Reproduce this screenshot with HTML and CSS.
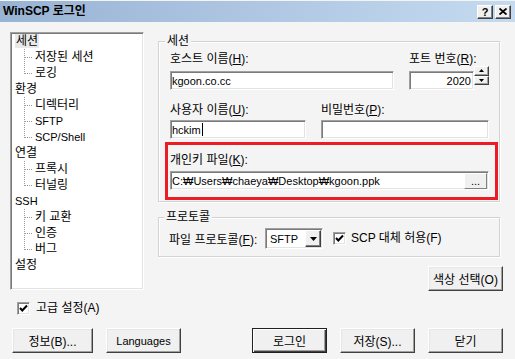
FILE: index.html
```html
<!DOCTYPE html>
<html>
  <head>
    <meta charset="utf-8">
    <title>WinSCP 로그인</title>
    <link rel="stylesheet" href="styles.css">
  </head>
  <body>
    <div class="titlebar">
      <span class="caption">WinSCP 로그인</span>
      <span class="capbtns">
        <button class="capbtn">?</button>
        <button class="capbtn">
          <svg width="8" height="7" viewBox="0 0 8 7"><path d="M0.5 0.5 L7.5 6.5 M7.5 0.5 L0.5 6.5" stroke="#000" stroke-width="1.8" fill="none"/></svg>
        </button>
      </span>
    </div>

    <div class="main">
      <div class="side">
        <ul class="tree">
          <li class="node"><span class="sel">세션</span></li>
          <li class="leaf">저장된 세션</li>
          <li class="leaf last">로깅</li>
          <li class="node">환경</li>
          <li class="leaf">디렉터리</li>
          <li class="leaf lat">SFTP</li>
          <li class="leaf last lat">SCP/Shell</li>
          <li class="node">연결</li>
          <li class="leaf">프록시</li>
          <li class="leaf last">터널링</li>
          <li class="node lat">SSH</li>
          <li class="leaf">키 교환</li>
          <li class="leaf">인증</li>
          <li class="leaf last">버그</li>
          <li class="node">설정</li>
        </ul>

        <div class="check adv">
          <span class="box"><svg width="11" height="11" viewBox="0 0 11 11"><path d="M2 5 L4.3 7.5 L9 2.5" stroke="#000" stroke-width="2" fill="none"/></svg></span>
          <span>고급 설정(A)</span>
        </div>
      </div>

      <div class="panel">
        <div class="group session">
          <div class="legend">세션</div>

          <div class="row first">
            <div class="field host">
              <div class="label">호스트 이름(<u>H</u>):</div>
              <div class="edit"><span class="lat">kgoon.co.cc</span></div>
            </div>
            <div class="field port">
              <div class="label">포트 번호(<u>R</u>):</div>
              <div class="spin">
                <div class="edit num"><span class="lat">2020</span></div>
                <div class="spinbtns">
                  <span class="spinbtn"><svg width="5" height="3" viewBox="0 0 5 3"><path d="M2.5 0 L5 3 L0 3 Z" fill="#000"/></svg></span>
                  <span class="spinbtn"><svg width="5" height="3" viewBox="0 0 5 3"><path d="M0 0 L5 0 L2.5 3 Z" fill="#000"/></svg></span>
                </div>
              </div>
            </div>
          </div>

          <div class="row second">
            <div class="field user">
              <div class="label">사용자 이름(<u>U</u>):</div>
              <div class="edit"><span class="lat">hckim</span><span class="caret"></span></div>
            </div>
            <div class="field pass">
              <div class="label">비밀번호(<u>P</u>):</div>
              <div class="edit"></div>
            </div>
          </div>

          <div class="keybox">
            <div class="label">개인키 파일(<u>K</u>):</div>
            <div class="edit">
              <span class="lat path">C:₩Users₩chaeya₩Desktop₩kgoon.ppk</span>
              <span class="browse">...</span>
            </div>
          </div>
        </div>

        <div class="group protocol">
          <div class="legend">프로토콜</div>
          <div class="protorow">
            <span class="protolabel">파일 프로토콜(<u>F</u>):</span>
            <div class="combo">
              <span class="lat">SFTP</span>
              <span class="dropbtn"><svg width="7" height="4" viewBox="0 0 7 4"><path d="M0 0 L7 0 L3.5 4 Z" fill="#000"/></svg></span>
            </div>
            <div class="check scp">
              <span class="box"><svg width="11" height="11" viewBox="0 0 11 11"><path d="M2 5 L4.3 7.5 L9 2.5" stroke="#000" stroke-width="2" fill="none"/></svg></span>
              <span>SCP 대체 허용(F)</span>
            </div>
          </div>
        </div>

        <button class="btn color">색상 선택(O)</button>
      </div>
    </div>

    <div class="buttons">
      <button class="btn wide">정보(B)...</button>
      <button class="btn"><span class="lat">Languages</span></button>
      <button class="btn default">로그인</button>
      <button class="btn">저장(S)...</button>
      <button class="btn">닫기</button>
    </div>
  </body>
</html>
```

FILE: styles.css
```css
* {
  box-sizing: border-box;
}
body {
  margin: 0;
  width: 515px;
  height: 359px;
  overflow: hidden;
  background: #f4f4f4;
  font-family: "Liberation Sans", "Noto Sans CJK KR", sans-serif;
  font-size: 12px;
  color: #000;
}
.lat {
  font-size: 11px;
}
u {
  text-decoration-thickness: 1px;
  text-underline-offset: 1px;
}

/* title bar */
.titlebar {
  display: flex;
  align-items: center;
  justify-content: space-between;
  height: 21px;
  margin-top: 1px;
  padding: 0 4px 0 3px;
  background: linear-gradient(to right, #99b3d4, #c4daf0);
}
.caption {
  font-weight: bold;
  line-height: 21px;
}
.capbtns {
  display: flex;
  gap: 2px;
}
.capbtn {
  display: flex;
  align-items: center;
  justify-content: center;
  width: 16px;
  height: 14px;
  padding: 0;
  background: #f0f0f0;
  border: 1px solid;
  border-color: #fff #404040 #404040 #fff;
  box-shadow: inset -1px -1px #808080;
  font: bold 11px "Liberation Sans", sans-serif;
  line-height: 12px;
}

/* layout */
.main {
  display: flex;
  padding: 10px 0 0 10px;
}
.side {
  width: 134px;
}
.panel {
  display: flex;
  flex-direction: column;
  width: 345px;
  margin-left: 14px;
}

/* tree */
.tree {
  width: 134px;
  height: 258px;
  margin: 0;
  padding: 0;
  list-style: none;
  background: #fff;
  border: 1px solid;
  border-color: #a0a0a0 #fff #fff #a0a0a0;
  box-shadow: inset 1px 1px #7a7a7a, inset -1px -1px #e3e3e3;
}
.tree li {
  height: 16px;
  line-height: 16px;
  white-space: nowrap;
}
.tree .node {
  padding-left: 4px;
}
.tree .sel {
  padding: 0 1px;
  background: #e9e9e9;
}
.tree .leaf {
  padding-left: 24px;
  background:
    repeating-linear-gradient(to bottom, #9a9a9a 0 1px, transparent 1px 2px) 13px 0 / 1px 100% no-repeat,
    repeating-linear-gradient(to right, #9a9a9a 0 1px, transparent 1px 2px) 14px 8px / 8px 1px no-repeat;
}
.tree .leaf.last {
  background-size: 1px 9px, 8px 1px;
}

/* checkbox */
.check {
  display: flex;
  align-items: center;
  gap: 6px;
  height: 13px;
  line-height: 13px;
  white-space: nowrap;
}
.box {
  display: flex;
  align-items: center;
  justify-content: center;
  width: 13px;
  height: 13px;
  background: #fff;
  border: 1px solid;
  border-color: #a0a0a0 #fff #fff #a0a0a0;
  box-shadow: inset 1px 1px #7a7a7a, inset -1px -1px #e3e3e3;
}
.adv {
  margin: 12px 0 0 7px;
}
.scp {
  gap: 5px;
}

/* group boxes */
.group {
  width: 342px;
  border: 1px solid #d3d3d3;
  box-shadow: inset 1px 1px #fff, 1px 1px #fff;
}
.legend {
  display: table;
  height: 14px;
  line-height: 14px;
  margin: -8px 0 0 -5px;
  padding: 0 2px;
  background: #f4f4f4;
}
.session {
  margin-top: 9px;
  padding: 0 10px 1px 11px;
}
.protocol {
  margin-top: 15px;
  padding: 0 10px 7px 10px;
}

/* fields */
.row {
  display: flex;
  gap: 15px;
}
.label {
  height: 14px;
  line-height: 14px;
  white-space: nowrap;
}
.edit {
  display: flex;
  align-items: center;
  height: 19px;
  padding: 0 1px;
  background: #fff;
  border: 1px solid;
  border-color: #a0a0a0 #fff #fff #a0a0a0;
  box-shadow: inset 1px 1px #7a7a7a, inset -1px -1px #e3e3e3;
  white-space: nowrap;
}
.row.first .label {
  margin-top: 4px;
}
.row.first .edit {
  margin-top: 5px;
}
.row.second .label {
  margin-top: 13px;
}
.row.second .edit {
  margin-top: 3px;
}
.host {
  width: 224px;
}
.port {
  width: 80px;
}
.user {
  width: 136px;
}
.pass {
  width: 168px;
}
.spin {
  display: flex;
}
.edit.num {
  width: 65px;
  justify-content: flex-end;
  padding-right: 2px;
}
.spinbtns {
  display: flex;
  flex-direction: column;
  width: 15px;
  height: 19px;
}
.spinbtn {
  display: flex;
  align-items: center;
  justify-content: center;
  height: 50%;
  background: #f0f0f0;
  border: 1px solid;
  border-color: #fff #404040 #404040 #fff;
  box-shadow: inset -1px -1px #a0a0a0;
}
.caret {
  width: 1px;
  height: 13px;
  margin-left: 1px;
  background: #000;
}

/* private key, marked with a red frame */
.keybox {
  margin: 3px -9px 0 -5px;
  padding: 8px 6px 7px 2px;
  border: 3px solid #ec1c24;
}
.keybox .edit {
  margin-top: 4px;
  padding-right: 1px;
}
.path {
  flex: 1;
}
.browse {
  display: flex;
  align-items: center;
  justify-content: center;
  width: 23px;
  height: 16px;
  background: #f0f0f0;
  border: 1px solid;
  border-color: #fff #808080 #808080 #fff;
  font-size: 11px;
  line-height: 10px;
}

/* protocol row */
.protorow {
  display: flex;
  align-items: center;
  height: 21px;
  margin-top: 4px;
}
.protolabel {
  width: 96px;
  white-space: nowrap;
}
.combo {
  display: flex;
  align-items: center;
  width: 58px;
  height: 21px;
  margin-right: 10px;
  padding: 0 1px 0 4px;
  background: #fff;
  border: 1px solid;
  border-color: #a0a0a0 #fff #fff #a0a0a0;
  box-shadow: inset 1px 1px #7a7a7a, inset -1px -1px #e3e3e3;
}
.dropbtn {
  display: flex;
  align-items: center;
  justify-content: center;
  width: 16px;
  height: 17px;
  margin-left: auto;
  background: #f0f0f0;
  border: 1px solid;
  border-color: #fff #404040 #404040 #fff;
  box-shadow: inset -1px -1px #808080;
}

/* push buttons */
.btn {
  width: 75px;
  height: 25px;
  padding: 0;
  background: #f0f0f0;
  border: 1px solid;
  border-color: #fff #404040 #404040 #fff;
  box-shadow: inset -1px -1px #a0a0a0, inset 1px 1px #e6e6e6;
  font-family: "Liberation Sans", "Noto Sans CJK KR", sans-serif;
  font-size: 12px;
  color: #000;
  white-space: nowrap;
}
.btn.wide {
  width: 81px;
}
.btn.color {
  align-self: flex-end;
  margin-top: 9px;
}
.btn.default {
  margin-left: auto;
  border-color: #202020;
  box-shadow: inset 1px 1px #fff, inset -1px -1px #404040, inset -2px -2px #a0a0a0;
}
.buttons {
  display: flex;
  gap: 13px;
  margin-top: 13px;
  padding: 0 12px;
}
```
